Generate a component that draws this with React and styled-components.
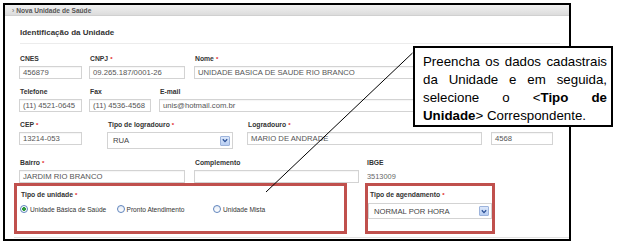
import React from 'react'
import styled, { createGlobalStyle } from 'styled-components'

const GlobalStyle = createGlobalStyle`
  html, body {
    margin: 0;
    padding: 0;
    background: #fff;
  }
  * {
    box-sizing: border-box;
  }
`

const Page = styled.div`
  position: relative;
  width: 621px;
  height: 244px;
  overflow: hidden;
  font-family: "Liberation Sans", Arial, sans-serif;
`

const Frame = styled.div`
  margin: 3px 0 0 3px;
  width: 568px;
  height: 238px;
  border: 2px solid #000;
  background: #fff;
  display: flex;
  flex-direction: column;
`

const Header = styled.div`
  height: 11px;
  line-height: 11px;
  padding-left: 7px;
  background: linear-gradient(#f1f1f1, #dcdcdc);
  border-bottom: 1px solid #d0d0d0;
  font-size: 6.6px;
  font-weight: bold;
  color: #555;
  span {
    font-weight: normal;
    margin-right: 2px;
  }
`

const Body = styled.div`
  padding-left: 14px;
  display: flex;
  flex-direction: column;
`

const Title = styled.div`
  margin: 12px 9px 0 1px;
  padding-bottom: 5px;
  border-bottom: 1px solid #ececec;
  font-size: 8px;
  line-height: 10px;
  font-weight: bold;
  color: #333;
`

const Row = styled.div`
  display: flex;
  align-items: flex-start;
  margin-top: ${({ $mt }) => $mt}px;
`

const Field = styled.div`
  display: flex;
  flex-direction: column;
  width: ${({ $w }) => ($w ? `${$w}px` : 'auto')};
  flex-shrink: 0;
`

const Label = styled.div`
  height: 8px;
  padding-left: ${({ $pl }) => ($pl === undefined ? 1 : $pl)}px;
  font-size: 6.8px;
  line-height: 8px;
  font-weight: bold;
  color: #333;
  white-space: nowrap;
`

const Req = styled.span`
  color: #e02020;
  font-size: 6px;
  margin-left: 2px;
  vertical-align: top;
`

const Input = styled.div`
  margin-top: 3px;
  width: ${({ $w }) => $w}px;
  height: 13px;
  line-height: 11px;
  padding-left: 3px;
  border: 1px solid #d3d3d3;
  box-shadow: inset 0 1px 1px rgba(0, 0, 0, 0.04);
  background: #fff;
  font-size: 7.7px;
  color: #555;
  white-space: nowrap;
  overflow: hidden;
`

const Plain = styled.div`
  margin-top: 3px;
  height: 13px;
  line-height: 13px;
  font-size: 7.4px;
  color: #666;
`

const Select = styled.div`
  margin-top: ${({ $mt }) => $mt}px;
  width: ${({ $w }) => $w}px;
  height: ${({ $h }) => $h}px;
  display: flex;
  align-items: center;
  justify-content: space-between;
  padding: 0 2px 0 5px;
  border: 1px solid #d3d3d3;
  background: #fff;
  font-size: 7.7px;
  color: #444;
`

const DropButton = styled.div`
  width: 10px;
  height: 10px;
  border: 1px solid #9db4dc;
  border-radius: 1px;
  background: linear-gradient(#dce8fb, #b7cdf2);
  display: flex;
  align-items: center;
  justify-content: center;
`

const Marked = styled.div`
  display: flex;
  align-items: flex-start;
  margin-left: -5px;
`

const RedBox = styled.div`
  margin-left: ${({ $ml }) => $ml}px;
  width: ${({ $w }) => $w}px;
  height: 51px;
  border: 3px solid #c0504d;
  padding: 5px 0 0 ${({ $pl }) => $pl}px;
  display: flex;
  flex-direction: column;
`

const Radios = styled.div`
  margin-top: 5px;
  display: grid;
  grid-template-columns: 96.5px 96.5px 96.5px;
`

const RadioItem = styled.div`
  display: flex;
  align-items: center;
  height: 10px;
  font-size: 6.6px;
  color: #333;
  white-space: nowrap;
`

const RadioDot = styled.span`
  width: 8px;
  height: 8px;
  margin-right: 2px;
  border-radius: 50%;
  border: 1px solid #5f84bd;
  background: ${({ $on }) =>
    $on
      ? 'radial-gradient(circle, #2f9a3c 0 1.6px, #fff 2.2px)'
      : 'linear-gradient(#e6ecf5, #fff)'};
  flex-shrink: 0;
`

const FootLine = styled.div`
  margin: 3px 0 0 -5px;
  border-top: 1px solid #e2e2e2;
`

const Callout = styled.div`
  position: absolute;
  left: 413px;
  top: 46px;
  width: 200px;
  height: 81px;
  border: 2px solid #000;
  background: #fff;
  padding: 5px 4px 0 8px;
  font-size: 13.3px;
  line-height: 18px;
  color: #000;
`

const CalloutLine = styled.div`
  text-align: justify;
  text-align-last: ${({ $last }) => ($last ? 'left' : 'justify')};
  white-space: nowrap;
  b {
    font-weight: bold;
  }
`

const Pointer = styled.svg`
  position: absolute;
  left: 0;
  top: 0;
  pointer-events: none;
`

const Chevron = () => (
  <svg width="6" height="5" viewBox="0 0 6 5">
    <polyline points="0.8,1.2 3,3.6 5.2,1.2" fill="none" stroke="#2a4f95" strokeWidth="1.3" />
  </svg>
)

const App = () => {
  return (
    <Page>
      <GlobalStyle />
      <Frame>
        <Header>
          <span>›</span>Nova Unidade de Saúde
        </Header>
        <Body>
          <Title>Identificação da Unidade</Title>

          <Row $mt={11}>
            <Field $w={70}>
              <Label>CNES</Label>
              <Input $w={63}>456879</Input>
            </Field>
            <Field $w={105}>
              <Label>CNPJ<Req>*</Req></Label>
              <Input $w={96}>09.265.187/0001-26</Input>
            </Field>
            <Field>
              <Label>Nome<Req>*</Req></Label>
              <Input $w={366}>UNIDADE BASICA DE SAUDE RIO BRANCO</Input>
            </Field>
          </Row>

          <Row $mt={9}>
            <Field $w={70}>
              <Label>Telefone</Label>
              <Input $w={63}>(11) 4521-0645</Input>
            </Field>
            <Field $w={70}>
              <Label>Fax</Label>
              <Input $w={62}>(11) 4536-4568</Input>
            </Field>
            <Field>
              <Label>E-mail</Label>
              <Input $w={320}>unis@hotmail.com.br</Input>
            </Field>
          </Row>

          <Row $mt={9}>
            <Field $w={88}>
              <Label>CEP<Req>*</Req></Label>
              <Input $w={63}>13214-053</Input>
            </Field>
            <Field $w={140}>
              <Label>Tipo de logradouro<Req>*</Req></Label>
              <Select $w={126} $h={17} $mt={3}>
                RUA
                <DropButton><Chevron /></DropButton>
              </Select>
            </Field>
            <Field $w={244}>
              <Label>Logradouro<Req>*</Req></Label>
              <Input $w={235}>MARIO DE ANDRADE</Input>
            </Field>
            <Field>
              <Label />
              <Input $w={62}>4568</Input>
            </Field>
          </Row>

          <Row $mt={10}>
            <Field $w={175}>
              <Label>Bairro<Req>*</Req></Label>
              <Input $w={166}>JARDIM RIO BRANCO</Input>
            </Field>
            <Field $w={173}>
              <Label>Complemento</Label>
              <Input $w={165} />
            </Field>
            <Field>
              <Label $pl={0}>IBGE</Label>
              <Plain>3513009</Plain>
            </Field>
          </Row>

          <Marked>
            <RedBox $w={333} $ml={0} $pl={3}>
              <Label>Tipo de unidade<Req>*</Req></Label>
              <Radios>
                <RadioItem><RadioDot $on />Unidade Básica de Saúde</RadioItem>
                <RadioItem><RadioDot />Pronto Atendimento</RadioItem>
                <RadioItem><RadioDot />Unidade Mista</RadioItem>
              </Radios>
            </RedBox>
            <RedBox $w={130} $ml={18} $pl={0}>
              <Label $pl={2}>Tipo de agendamento<Req>*</Req></Label>
              <Select $w={124} $h={16} $mt={4}>
                NORMAL POR HORA
                <DropButton><Chevron /></DropButton>
              </Select>
            </RedBox>
          </Marked>
          <FootLine />
        </Body>
      </Frame>

      <Pointer width="621" height="244" viewBox="0 0 621 244">
        <line x1="412.5" y1="53" x2="266" y2="192" stroke="#000" strokeWidth="1" />
      </Pointer>

      <Callout>
        <CalloutLine>Preencha os dados cadastrais</CalloutLine>
        <CalloutLine>da Unidade e em seguida,</CalloutLine>
        <CalloutLine>selecione o &lt;<b>Tipo de</b></CalloutLine>
        <CalloutLine $last><b>Unidade</b>&gt; Correspondente.</CalloutLine>
      </Callout>
    </Page>
  )
}

export default App
